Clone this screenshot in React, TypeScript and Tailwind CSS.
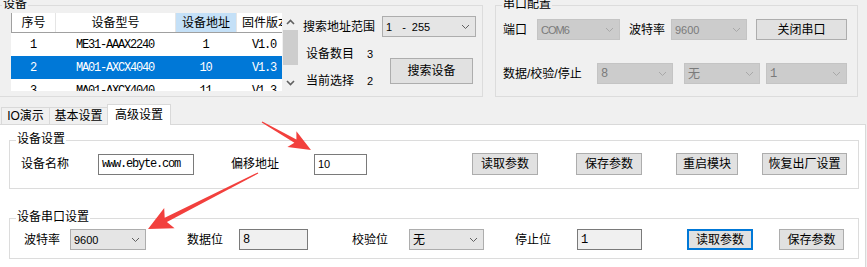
import React from 'react';

type Props = { className?: string; children?: React.ReactNode };

const mono = "font-['Liberation_Mono',monospace] text-[12px] tracking-[-1.2px]";

function Chevron({ up, dim, bold }: { up?: boolean; dim?: boolean; bold?: boolean }) {
  return (
    <svg width="9" height="6" viewBox="0 0 9 6" className="shrink-0">
      <path
        d={up ? 'M1 5 L4.5 1.5 L8 5' : 'M1 1 L4.5 4.5 L8 1'}
        fill="none"
        stroke={dim ? '#a8a8a8' : '#606060'}
        strokeWidth={bold ? 1.6 : 1}
      />
    </svg>
  );
}

function Group({ title, className = '', titleClass = '', children }: Props & { title: string; titleClass?: string }) {
  return (
    <div className={`relative shrink-0 border border-[#dcdcdc] ${className}`}>
      <span className={`absolute top-[-10px] whitespace-nowrap px-px leading-[17px] ${titleClass}`}>{title}</span>
      {children}
    </div>
  );
}

function Combo({ className = '', disabled, children }: Props & { disabled?: boolean }) {
  return (
    <div
      className={`flex h-[21px] shrink-0 items-center justify-between border pl-[3px] pr-[5px] ${
        disabled ? 'border-[#c4c4c4] bg-[#cccccc] text-[#7a7a7a]' : 'border-[#adadad] bg-[#e5e5e5]'
      } ${className}`}
    >
      <span className="whitespace-pre">{children}</span>
      <Chevron dim={disabled} />
    </div>
  );
}

function Btn({ className = '', focused, children }: Props & { focused?: boolean }) {
  return (
    <button
      type="button"
      className={`flex shrink-0 items-center justify-center bg-[#e1e1e1] leading-[16px] ${
        focused ? 'border-2 border-[#0078d7]' : 'border border-[#adadad]'
      } ${className}`}
    >
      {children}
    </button>
  );
}

function Field({ className = '', disabled, children }: Props & { disabled?: boolean }) {
  return (
    <div
      className={`flex h-[21px] shrink-0 items-center border border-[#7a7a7a] pl-[3px] ${
        disabled ? 'bg-[#f0f0f0]' : 'bg-white'
      } ${className}`}
    >
      {children}
    </div>
  );
}

const rows = [
  { no: '1', model: 'ME31-AAAX2240', addr: '1', ver: 'V1.0' },
  { no: '2', model: 'MA01-AXCX4040', addr: '10', ver: 'V1.3', selected: true },
  { no: '3', model: 'MA01-AXCX4040', addr: '11', ver: 'V1.3' },
];

function DeviceList() {
  return (
    <div className="flex h-[78px] w-[288px] shrink-0">
      <div className="h-full w-[271px] overflow-hidden bg-white">
        {/* header */}
        <div className="flex h-[20px] border-b border-[#a0a0a0]">
          <div className="flex w-[44px] items-center justify-center border-l border-[#a0a0a0]">序号</div>
          <div className="flex w-[120px] items-center justify-center border-l border-[#e5e5e5]">设备型号</div>
          <div className="flex w-[61px] items-center justify-center border-l border-[#e5e5e5] bg-[#c4e0f7]">设备地址</div>
          <div className="flex w-[46px] items-center overflow-hidden whitespace-nowrap border-l border-[#e5e5e5] pl-[5px]">
            固件版本
          </div>
        </div>
        {rows.map((r) => (
          <div
            key={r.no}
            className={`flex h-[23px] items-center ${mono} ${r.selected ? 'bg-[#0078d7] text-white' : ''}`}
          >
            <div className="w-[44px] text-center">{r.no}</div>
            <div className="w-[120px] text-center">{r.model}</div>
            <div className="w-[61px] text-center">{r.addr}</div>
            <div className="w-[46px] pr-[6px] text-right">{r.ver}</div>
          </div>
        ))}
      </div>
      {/* scrollbar */}
      <div className="flex h-full w-[17px] flex-col bg-[#f0f0f0]">
        <div className="flex h-[17px] items-center justify-center">
          <Chevron up bold />
        </div>
        <div className="mx-px h-[35px] bg-[#cdcdcd]" />
        <div className="flex-1" />
        <div className="flex h-[17px] items-center justify-center">
          <Chevron bold />
        </div>
      </div>
    </div>
  );
}

export default function App() {
  return (
    <div className="relative h-[267px] w-[867px] overflow-hidden bg-[#f0f0f0] text-[12px] leading-[16px] text-black font-['Liberation_Sans','Noto_Sans_CJK_SC',sans-serif]">
      {/* top area */}
      <div className="flex h-[97px] items-start">
        <Group title="设备" className="ml-[-1px] mt-[5px] h-[92px] w-[484px]" titleClass="left-[2px] bg-[#f0f0f0]">
          <div className="flex pl-[11px] pt-[7px]">
            <DeviceList />
            <div className="ml-[4px] flex flex-col">
              <div className="mt-[3px] flex h-[21px] items-center">
                <span className="w-[79px] shrink-0 whitespace-nowrap">搜索地址范围</span>
                <Combo className="w-[94px] text-[11px]">
                  {'1'}
                  <span className="ml-[10px]">-</span>
                  <span className="ml-[6px]">255</span>
                </Combo>
              </div>
              <div className="flex">
                <div className="flex w-[87px] flex-col pl-[3px]">
                  <div className="mt-[9px] flex h-[16px] items-center">
                    <span className="w-[61px] shrink-0">设备数目</span>
                    <span className="text-[11px]">3</span>
                  </div>
                  <div className="mt-[11px] flex h-[16px] items-center">
                    <span className="w-[61px] shrink-0">当前选择</span>
                    <span className="text-[11px]">2</span>
                  </div>
                </div>
                <Btn className="mt-[21px] h-[26px] w-[83px]">搜索设备</Btn>
              </div>
            </div>
          </div>
        </Group>

        <Group title="串口配置" className="ml-[12px] mt-[5px] h-[92px] w-[363px]" titleClass="left-[6px] bg-[#f0f0f0]">
          <div className="mt-[13px] flex h-[21px] items-center pl-[7px]">
            <span className="w-[34px] shrink-0">端口</span>
            <Combo disabled className="w-[83px] text-[11px] tracking-[-1px]">COM6</Combo>
            <span className="ml-[9px] w-[42px] shrink-0">波特率</span>
            <Combo disabled className="w-[76px] text-[11px]">9600</Combo>
            <Btn className="ml-[9px] h-[21px] w-[91px]">关闭串口</Btn>
          </div>
          <div className="mt-[23px] flex h-[21px] items-center pl-[7px]">
            <span className="w-[94px] shrink-0 whitespace-nowrap">数据/校验/停止</span>
            <Combo disabled className={`w-[76px] ${mono}`}>8</Combo>
            <Combo disabled className="ml-[11px] w-[76px]">无</Combo>
            <Combo disabled className={`ml-[6px] w-[81px] ${mono}`}>1</Combo>
          </div>
        </Group>
      </div>

      {/* tabs */}
      <div className="flex h-[27px] items-end pl-px">
        <div className="flex h-[17px] w-[48px] items-center justify-center border-l border-t border-[#d9d9d9]">IO演示</div>
        <div className="flex h-[17px] w-[58px] items-center justify-center border-l border-t border-[#d9d9d9]">基本设置</div>
        <div className="relative z-10 mb-[-1px] flex h-[21px] w-[64px] items-center justify-center border-l border-r border-t border-[#d9d9d9] bg-white">
          高级设置
        </div>
      </div>

      {/* tab page */}
      <div className="h-[143px] w-[866px] border-r border-t border-[#d9d9d9] bg-white pt-[15px]">
        <Group title="设备设置" className="ml-[9px] h-[49px] w-[850px]" titleClass="left-[6px] bg-white">
          <div className="mt-[12px] flex h-[22px] items-center pl-[11px]">
            <span className="w-[77px] shrink-0">设备名称</span>
            <Field className={`w-[96px] ${mono}`}>www.ebyte.com</Field>
            <span className="ml-[37px] w-[83px] shrink-0">偏移地址</span>
            <Field className="w-[53px] text-[11px]">10</Field>
            <Btn className="ml-[105px] h-[22px] w-[66px]">读取参数</Btn>
            <Btn className="ml-[38px] h-[22px] w-[66px]">保存参数</Btn>
            <Btn className="ml-[34px] h-[22px] w-[62px]">重启模块</Btn>
            <Btn className="ml-[24px] h-[22px] w-[85px]">恢复出厂设置</Btn>
          </div>
        </Group>

        <Group title="设备串口设置" className="ml-[9px] mt-[29px] h-[41px] w-[850px]" titleClass="left-[6px] bg-white">
          <div className="mt-[10px] flex h-[21px] items-center pl-[14px]">
            <span className="w-[46px] shrink-0">波特率</span>
            <Combo className="w-[76px] text-[11px]">9600</Combo>
            <span className="ml-[41px] w-[52px] shrink-0">数据位</span>
            <Field disabled className={`w-[69px] ${mono}`}>8</Field>
            <span className="ml-[44px] w-[57px] shrink-0">校验位</span>
            <Combo className="w-[75px]">无</Combo>
            <span className="ml-[31px] w-[62px] shrink-0">停止位</span>
            <Field disabled className={`w-[65px] ${mono}`}>1</Field>
            <Btn focused className="ml-[45px] h-[21px] w-[66px]">读取参数</Btn>
            <Btn className="ml-[26px] h-[21px] w-[65px]">保存参数</Btn>
          </div>
        </Group>
      </div>

      {/* annotation arrows drawn over the window */}
      <svg className="pointer-events-none absolute left-0 top-0 z-20" width="867" height="267" viewBox="0 0 867 267">
        <polygon
          fill="#f2403d"
          points="262.3,121.5 296.4,139.4 296.4,131.3 311,150 287.4,146.9 294.4,142.8 261.7,122.5"
        />
        <polygon
          fill="#f2403d"
          points="257.7,172.5 164.7,217.7 164.2,207.9 148,229 174.6,228.3 166.9,222.1 258.3,173.5"
        />
      </svg>
    </div>
  );
}
